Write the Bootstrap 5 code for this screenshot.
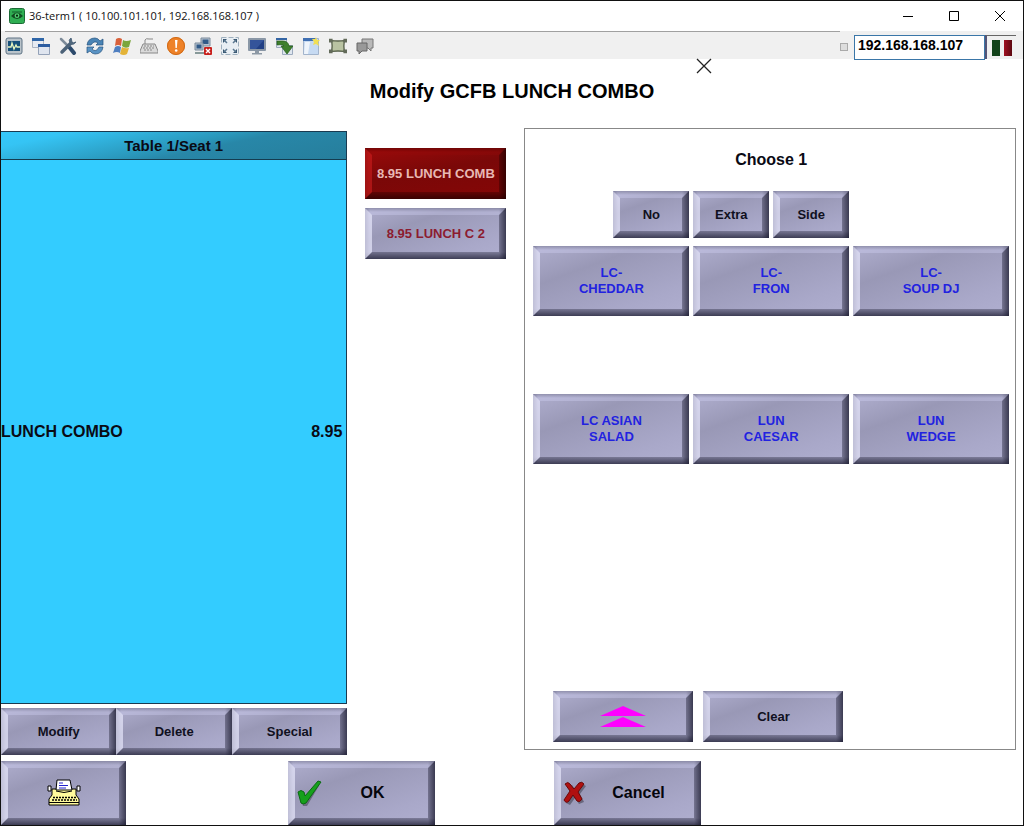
<!DOCTYPE html>
<html lang="en">
<head>
<meta charset="utf-8">
<meta name="viewport" content="width=device-width, initial-scale=1">
<title>36-term1</title>
<link href="https://cdn.jsdelivr.net/npm/bootstrap@5.3.0/dist/css/bootstrap.min.css" rel="stylesheet">
<style>
  body { font-family: "Liberation Sans", Arial, sans-serif; color: #0a0a14; line-height: 16px; }
  .app-window { border: 1px solid #111; }
  .title-bar { height: 30px; padding: 0 17px 0 8px; font: 11px/16px "Open Sans", sans-serif; color: #111; }
  .win-btns { gap: 34px; }
  .win-btn { border: 0; background: none; padding: 0; width: 12px; height: 12px; display: flex; }
  .tool-bar { height: 28px; background: #f0f0f0; padding: 0 7px 0 4px; }
  .tool-top { border-top: 1px solid #a0a0a0; padding-top: 5px; gap: 9px; }
  .tool-btn { border: 0; background: none; padding: 0; width: 18px; height: 18px; display: flex; }
  .tool-btn svg { width: 18px; height: 18px; }
  .ip-box { width: 131px; height: 25px; border: 1px solid #3a76a8; padding: 0 3px 4px; font-weight: 700; font-size: 14px; color: #000; background: #fff; border-radius: 0; }
  .lamps { width: 31px; height: 24px; border-top: 1px solid #666; border-left: 2px solid #557; }
  .lamp { width: 8px; height: 16px; }
  .lamp-g { background: #12421a; }
  .lamp-r { background: linear-gradient(90deg, #a01020, #5c0810); }
  .tiny-check { appearance: none; width: 8px; height: 8px; border: 1px solid #aaa; background: #ddd; margin: 0 6px 0 0; }
  .dialog-x { position: absolute; left: 68%; top: -1px; border: 0; background: none; padding: 0; display: flex; }
  .dialog-title { font-size: 20px; line-height: 24px; padding: 20px 0 25px; margin: 0; font-weight: 700; color: #000; }
  .board { display: grid; grid-template-columns: 346fr 141fr 491fr; column-gap: 18px; padding-right: 7px; min-height: 0; }
  .order-box { margin-top: 3px; background: #3cf; border: 1px solid #1a3a50; border-left-width: 0; font-size: 16px; font-weight: 700; }
  .seat-bar { height: 28px; border-bottom: 1px solid #143c50; background: linear-gradient(168deg, #35c8fa 0%, #35c4f4 15%, #2a98bc 50%, #2887a8 60%, #267e9c 100%); font-size: 15px; }
  .bevel {
    border: 7px solid; border-radius: 0;
    border-color: rgba(215,215,250,.32) rgba(25,25,45,.36) rgba(25,25,45,.32) rgba(235,235,255,.66);
    background:
      linear-gradient(90deg, rgba(60,60,90,.5), transparent 5px) border-box,
      linear-gradient(180deg, rgba(50,50,70,.5), transparent 4px) border-box,
      linear-gradient(0deg, rgba(20,20,40,.6), transparent 7px) border-box,
      linear-gradient(270deg, rgba(20,20,40,.6), transparent 7px) border-box,
      linear-gradient(160deg, #b0afcf 0%, #9998b6 32%, #a9a8c9 75%, #b0afd0 100%) border-box;
    font-size: 13px; font-weight: 700; line-height: 16px; padding: 0; color: #101020;
    display: flex; align-items: center; justify-content: center; text-align: center;
  }
  .bevel:active { filter: brightness(.9); }
  .bevel-red { border-color: rgba(150,10,10,.3) rgba(20,0,0,.3) rgba(30,0,0,.3) rgba(205,30,30,.6); color: #e8b8b4;
    background:
      linear-gradient(90deg, rgba(50,0,0,.5), transparent 4px) border-box,
      linear-gradient(180deg, rgba(50,0,0,.5), transparent 4px) border-box,
      linear-gradient(0deg, rgba(30,0,0,.6), transparent 7px) border-box,
      linear-gradient(270deg, rgba(30,0,0,.6), transparent 7px) border-box,
      linear-gradient(170deg, #9c0a0a, #7a0808 45%, #860606) border-box; }
  .maroon { color: #8c1c30; }
  .choice { color: #2222e0; }
  .h-combo { height: 51px; }
  .h-mod { height: 47px; }
  .h-choice { height: 70px; }
  .h-foot { height: 64px; }
  .combo-list { padding-top: 20px; gap: 9px; }
  .choose-box { border: 1px solid #888; margin-bottom: 5px; padding: 0 6px 7px 8px; }
  .choose-title { font-size: 16px; line-height: 20px; padding: 21px 0; margin: 0; font-weight: 700; }
  .six { display: grid; grid-template-columns: repeat(6, 1fr); gap: 4px; }
  .wide-cell { grid-column: span 2; }
  .spacer-row { grid-column: 1 / -1; }
  .first-mod { grid-column: 2; }
  .page-row { padding-left: 20px; gap: 10px; }
  .page-row .bevel { width: 140px; }
  .foot-grid { display: grid; grid-template-columns: 287fr 266fr 469fr; padding-top: 6px; }
  .foot-print { width: 125px; }
  .foot-act { width: 147px; font-size: 16px; justify-content: flex-start; color: #05050c; }
  .foot-act span { flex: 1; padding-right: 6px; }
  .foot-act svg { width: 28px; height: 28px; flex: none; }
</style>
</head>
<body>
<div class="app-window d-flex flex-column min-vh-100">
  <header class="title-bar d-flex align-items-center">
    <svg width="16" height="16" viewBox="0 0 16 16"><rect x=".5" y=".5" width="15" height="15" rx="2" fill="#2fae52" stroke="#1b6a35"/><path d="M2 8q6-7 12 0q-6 6-12 0z" fill="#124a20"/><circle cx="8" cy="7.700" r="2.400" fill="#4fd070"/><circle cx="8" cy="7.700" r="1.100" fill="#06210c"/><path d="M3 4h10" stroke="#155c2b"/></svg>
    <span class="ps-1 me-auto">36-term1 ( 10.100.101.101, 192.168.168.107 )</span>
    <div class="win-btns d-flex">
      <button class="win-btn" aria-label="Minimize"><svg width="12" height="12"><path d="M1 6.500h10" stroke="#000"/></svg></button>
      <button class="win-btn" aria-label="Maximize"><svg width="12" height="12"><path d="M1.500 1.500h9v9h-9z" fill="none" stroke="#000"/></svg></button>
      <button class="win-btn" aria-label="Close"><svg width="12" height="12"><path d="M1 1l10 10M11 1L1 11" stroke="#000"/></svg></button>
    </div>
  </header>

  <div class="tool-bar d-flex">
    <div class="tool-top d-flex flex-grow-1 align-items-start">
      <button class="tool-btn" aria-label="Monitor"><svg viewBox="0 0 18 18"><rect x="1" y="1" width="16" height="16" rx="2" fill="#b9c3ca" stroke="#5e7384"/><rect x="3" y="4" width="12" height="10" fill="#17507a"/><path d="M3 10h3l1-4 2 6 2-4 1 2h3" fill="none" stroke="#e8f6c0" stroke-width="1.300"/></svg></button>
      <button class="tool-btn" aria-label="Windows"><svg viewBox="0 0 18 18"><path d="M.5 1.500h11v9H.500z" fill="#e6ebf2" stroke="#a9b4c4"/><path d="M0 1h12v3H0z" fill="#2f66a8"/><path d="M6.500 7.500h11v10h-11z" fill="#dfe5ef" stroke="#94a2b8"/><path d="M6 7h12v3H6z" fill="#2b5ca0"/></svg></button>
      <button class="tool-btn" aria-label="Tools"><svg viewBox="0 0 18 18"><path d="M2 2l7 7" stroke="#7d8b99" stroke-width="2.500" stroke-linecap="round"/><path d="M11 11l4 5" stroke="#2c4a6c" stroke-width="4" stroke-linecap="round"/><path d="M3 15l9-9" stroke="#4c6278" stroke-width="3.500" stroke-linecap="round"/><path d="M12 1q-3 2-1 5q3 3 6-1l-3 1-1-1z" fill="#51687e" stroke="#51687e"/></svg></button>
      <button class="tool-btn" aria-label="Refresh"><svg viewBox="0 0 18 18"><path d="M1 8Q2 1 9 1q3 0 5 3l3-2v6h-7l2-2Q8 3 5 8z" fill="#4a84b5" stroke="#24527e" stroke-width=".7"/><path d="M17 10q-1 7-8 7-3 0-5-3l-3 2v-6h7l-2 2q4 4 7-2z" fill="#5a94c5" stroke="#24527e" stroke-width=".7"/></svg></button>
      <button class="tool-btn" aria-label="Start menu"><svg viewBox="0 0 18 18"><path d="M3 2q3-2 6 0L8 9q-3-2-6 0z" fill="#d9603a"/><path d="M10 3q3 2 8 0l-2 7q-4 2-7-1z" fill="#7aa63c"/><path d="M2 10q3-2 6 0l-1 6q-3-2-7 0z" fill="#4f7fc0"/><path d="M9 10q3 2 7 1l-2 6q-3 2-7 0z" fill="#e3b338"/></svg></button>
      <button class="tool-btn" aria-label="Keyboard"><svg viewBox="0 0 18 18"><path d="M5 7V3q1-2 4-1h4" fill="none" stroke="#888"/><path d="M3 7h12l3 7v2H0v-2z" fill="#dadada" stroke="#888"/><path d="M4 9h10M3 11h12M4 13h9" stroke="#888" stroke-dasharray="2 1"/></svg></button>
      <button class="tool-btn" aria-label="Alert"><svg viewBox="0 0 18 18"><circle cx="9" cy="9" r="9" fill="#ee8228"/><circle cx="9" cy="9" r="8.500" fill="none" stroke="#cf6a18"/><path d="M8 3h2.500l-.7 8H8.500z" fill="#fff"/><circle cx="9.200" cy="13.500" r="1.300" fill="#fff"/></svg></button>
      <button class="tool-btn" aria-label="Disconnect"><svg viewBox="0 0 18 18"><path d="M7 1h9v8H7z" fill="#b8c3cf" stroke="#7b8b9c"/><path d="M8.500 2.500h6V7h-6z" fill="#315a88"/><path d="M1 6h8v7H1z" fill="#b8c3cf" stroke="#7b8b9c"/><path d="M2.500 7.500h5v4h-5z" fill="#315a88"/><path d="M1 16h10v-2" stroke="#899" fill="none" stroke-width="2"/><rect x="10" y="10" width="8" height="8" rx="1" fill="#c8201c"/><path d="M12 12l4 4M16 12l-4 4" stroke="#fff" stroke-width="1.400"/></svg></button>
      <button class="tool-btn" aria-label="Full screen"><svg viewBox="0 0 18 18"><path d="M.5.500h17v17H.500z" fill="#e8eef3" stroke="#9fb0be" stroke-dasharray="5 2"/><path d="M2 2h4L2 6zM16 2v4l-4-4zM2 16v-4l4 4zM16 16h-4l4-4z" fill="#36556f"/><path d="M3 3l3 3M15 3l-3 3M3 15l3-3M15 15l-3-3" stroke="#5b7890" stroke-width="1.500"/></svg></button>
      <button class="tool-btn" aria-label="Display"><svg viewBox="0 0 18 18"><rect x="0" y="1" width="18" height="13" rx="1" fill="#8a97a6"/><path d="M2 3h14v9H2z" fill="#213f84"/><path d="M2 3h14L8 12H2z" fill="#34549a"/><path d="M7 14h4v2h3v1.500H4V16h3z" fill="#8d99a5"/></svg></button>
      <button class="tool-btn" aria-label="Transfer"><svg viewBox="0 0 18 18"><path d="M1.500 1.500h10v9h-10zM7.500 8.500h10v9h-10z" fill="#dfe6ef" stroke="#9caabe"/><path d="M1 1h11v2H1z" fill="#3465a4"/><path d="M2 4h6q5 0 6 5h4l-6 8-6-8h3Q8 7 2 8z" fill="#3f7f2c" stroke="#245a18" stroke-width=".7"/></svg></button>
      <button class="tool-btn" aria-label="New window"><svg viewBox="0 0 18 18"><path d="M1.500 1.500h15v16h-15z" fill="#c6daf2" stroke="#a2b4cc"/><path d="M1 1h13v3H1z" fill="#3f6fb2"/><path d="M3 5h5L6 17H2z" fill="#fff" opacity=".7"/><path d="M14 0l1 3 3 0-2 2 1 4-3-2-3 1 1-3-2-3 3 0z" fill="#f1df55"/></svg></button>
      <button class="tool-btn" aria-label="Region"><svg viewBox="0 0 20 18"><path d="M3 3q7 1 14 0-1 6 0 12-7-1-14 0 1-6 0-12z" fill="#b9c3a2" stroke="#59634c" stroke-width="1.500"/><path d="M0 1h4v4H0zM16 1h4v4h-4zM0 13h4v4H0zM16 13h4v4h-4z" fill="#636b5a"/></svg></button>
      <button class="tool-btn" aria-label="Chat"><svg viewBox="0 0 18 18"><path d="M6 2h11v9h-2v3l-3-3H6z" fill="#b9b9b9" stroke="#777"/><path d="M1 6h10v8H6l-3 3v-3H1z" fill="#999" stroke="#666"/></svg></button>
    </div>
    <div class="d-flex align-items-center pt-1">
      <input class="tiny-check" type="checkbox" aria-label="Lock address">
      <input class="ip-box" type="text" value="192.168.168.107" aria-label="Terminal address">
      <div class="lamps d-flex align-items-center justify-content-center gap-1"><div class="lamp lamp-g"></div><div class="lamp lamp-r"></div></div>
    </div>
  </div>

  <main class="d-flex flex-column flex-grow-1 position-relative">
    <button class="dialog-x" aria-label="Close dialog"><svg width="16" height="16"><path d="M1 1l14 14M15 1L1 15" stroke="#222" stroke-width="1.300"/></svg></button>
    <h1 class="dialog-title text-center">Modify GCFB LUNCH COMBO</h1>
    <div class="board flex-grow-1">
      <section class="d-flex flex-column">
        <div class="order-box d-flex flex-column flex-grow-1">
          <div class="seat-bar d-flex align-items-center justify-content-center">Table 1/Seat 1</div>
          <div class="d-flex flex-grow-1 align-items-center justify-content-between pe-1"><span>LUNCH COMBO</span><span>8.95</span></div>
        </div>
        <div class="d-flex pt-1">
          <button class="bevel h-mod w-100">Modify</button>
          <button class="bevel h-mod w-100">Delete</button>
          <button class="bevel h-mod w-100">Special</button>
        </div>
      </section>
      <section class="combo-list d-flex flex-column">
        <button class="bevel bevel-red h-combo text-nowrap">8.95 LUNCH COMB</button>
        <button class="bevel maroon h-combo text-nowrap">8.95 LUNCH C 2</button>
      </section>
      <section class="choose-box d-flex flex-column">
        <h2 class="choose-title text-center">Choose 1</h2>
        <div class="six mb-2 pb-0">
          <button class="bevel h-mod first-mod">No</button>
          <button class="bevel h-mod">Extra</button>
          <button class="bevel h-mod">Side</button>
        </div>
        <div class="six">
          <button class="bevel choice wide-cell h-choice">LC-<br>CHEDDAR</button>
          <button class="bevel choice wide-cell h-choice">LC-<br>FRON</button>
          <button class="bevel choice wide-cell h-choice">LC-<br>SOUP DJ</button>
          <div class="h-choice spacer-row"></div>
          <button class="bevel choice wide-cell h-choice">LC ASIAN<br>SALAD</button>
          <button class="bevel choice wide-cell h-choice">LUN<br>CAESAR</button>
          <button class="bevel choice wide-cell h-choice">LUN<br>WEDGE</button>
        </div>
        <div class="page-row d-flex mt-auto">
          <button class="bevel h-combo" aria-label="Page up"><svg width="48" height="24"><path d="M24 1l23 10H1zM24 12l23 10H1z" fill="#f0f"/></svg></button>
          <button class="bevel h-combo">Clear</button>
        </div>
      </section>
    </div>
    <div class="foot-grid">
      <button class="bevel foot-print h-foot" aria-label="Print"><svg width="34" height="28" viewBox="0 0 34 28"><path d="M5 10h24v6l3 4v6H2v-6l3-4z" fill="#fffa9c" stroke="#000"/><path d="M9 11L10 1h13l2 10z" fill="#fff" stroke="#000"/><path d="M12 4h4M12 6.500h9M12 9h7" stroke="#22c"/><path d="M1 7h3v5H1zM30 7h3v5h-3z" fill="#fff" stroke="#000"/><path d="M9 12q8 3 16 0" fill="none" stroke="#000"/><path d="M6 18.500h23M5 21h25" stroke="#000" stroke-width="1.500" stroke-dasharray="2 1"/><path d="M2 23.500h30" stroke="#000"/></svg></button>
      <button class="bevel foot-act h-foot"><svg viewBox="0 0 28 28"><path d="M5 16l5 2L25 5 12 27H8z" fill="#556" opacity=".7"/><path d="M3 13q3-3 6 0l1 4L23 2l3 1L11 24q-3 2-5 0z" fill="#16a01c" stroke="#0b6a12"/></svg><span>OK</span></button>
      <button class="bevel foot-act h-foot"><svg viewBox="0 0 28 28"><path d="M5 6l5-1 4 6 6-7 4 2-6 8 4 8-5 2-4-6-5 7-4-2 6-9z" fill="#445" opacity=".6" transform="translate(1 1)"/><path d="M4 5q3-3 5 0l4 5 5-6q3-2 5 1l-6 8 4 7q-2 4-5 2l-4-6-4 6q-3 3-5-1l6-9z" fill="#b01010" stroke="#6a0808"/></svg><span>Cancel</span></button>
    </div>
  </main>
</div>
<script src="https://cdn.jsdelivr.net/npm/bootstrap@5.3.0/dist/js/bootstrap.bundle.min.js"></script>
</body>
</html>
